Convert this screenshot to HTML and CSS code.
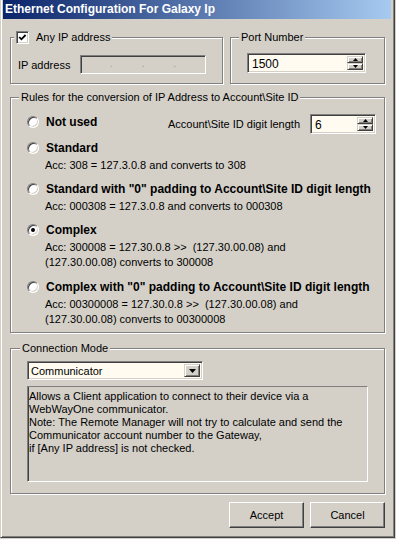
FILE: index.html
```html
<!DOCTYPE html>
<html lang="en">
<head>
  <meta charset="UTF-8" />
  <title>Ethernet Configuration For Galaxy Ip</title>
  <link rel="stylesheet" href="styles.css">
</head>
<body>
  <div class="window">
    <div class="titlebar">Ethernet Configuration For Galaxy Ip</div>

    <div class="content">
      <!-- IP address / port -->
      <div class="top-row">
        <fieldset class="group group-ip">
          <legend>
            <span class="legend-check">
              <span class="checkbox">
                <svg width="9" height="9" viewBox="0 0 9 9"><polyline points="1.2,4 3.4,6.3 7.6,2" fill="none" stroke="#000" stroke-width="1.8"/></svg>
              </span>
              Any IP address
            </span>
          </legend>
          <div class="ip-row">
            <span class="ip-label">IP address</span>
            <div class="field ip-field">
              <span>.</span><span>.</span><span>.</span>
            </div>
          </div>
        </fieldset>

        <fieldset class="group group-port">
          <legend>Port Number</legend>
          <div class="field spin-field port-field">
            <span class="spin-value">1500</span>
            <span class="spin">
              <span class="btn3d spin-btn"><svg width="5" height="3" viewBox="0 0 5 3"><polygon points="0,3 5,3 2.5,0" fill="#000"/></svg></span>
              <span class="btn3d spin-btn"><svg width="5" height="3" viewBox="0 0 5 3"><polygon points="0,0 5,0 2.5,3" fill="#000"/></svg></span>
            </span>
          </div>
        </fieldset>
      </div>

      <!-- Conversion rules -->
      <fieldset class="group group-rules">
        <legend>Rules for the conversion of IP Address to Account\Site ID</legend>

        <div class="option option-first">
          <div class="radio-row"><span class="radio"></span>Not used</div>
          <div class="digit-length">
            <span>Account\Site ID digit length</span>
            <div class="field spin-field digit-field">
              <span class="spin-value">6</span>
              <span class="spin">
                <span class="btn3d spin-btn"><svg width="5" height="3" viewBox="0 0 5 3"><polygon points="0,3 5,3 2.5,0" fill="#000"/></svg></span>
                <span class="btn3d spin-btn"><svg width="5" height="3" viewBox="0 0 5 3"><polygon points="0,0 5,0 2.5,3" fill="#000"/></svg></span>
              </span>
            </div>
          </div>
        </div>

        <div class="option option-second">
          <div class="radio-row"><span class="radio"></span>Standard</div>
          <div class="desc">Acc: 308 = 127.3.0.8 and converts to 308</div>
        </div>

        <div class="option">
          <div class="radio-row"><span class="radio"></span>Standard with "0" padding to Account\Site ID digit length</div>
          <div class="desc">Acc: 000308 = 127.3.0.8 and converts to 000308</div>
        </div>

        <div class="option">
          <div class="radio-row"><span class="radio checked"></span>Complex</div>
          <div class="desc">Acc: 300008 = 127.30.0.8 &gt;&gt;&nbsp; (127.30.00.08) and<br>(127.30.00.08) converts to 300008</div>
        </div>

        <div class="option option-last">
          <div class="radio-row"><span class="radio"></span>Complex with "0" padding to Account\Site ID digit length</div>
          <div class="desc">Acc: 00300008 = 127.30.0.8 &gt;&gt;&nbsp; (127.30.00.08) and<br>(127.30.00.08) converts to 00300008</div>
        </div>
      </fieldset>

      <!-- Connection mode -->
      <fieldset class="group group-mode">
        <legend>Connection Mode</legend>
        <div class="field combo">
          <span class="combo-value">Communicator</span>
          <span class="btn3d combo-btn"><svg width="7" height="4" viewBox="0 0 7 4"><polygon points="0,0 7,0 3.5,4" fill="#000"/></svg></span>
        </div>
        <div class="static-box">
          Allows a Client application to connect to their device via a<br>
          WebWayOne communicator.<br>
          Note: The Remote Manager will not try to calculate and send the<br>
          Communicator account number to the Gateway,<br>
          if [Any IP address] is not checked.
        </div>
      </fieldset>

      <div class="buttons">
        <button class="btn3d push">Accept</button>
        <button class="btn3d push">Cancel</button>
      </div>
    </div>
  </div>
</body>
</html>
```

FILE: styles.css
```css
/* Basic Reset */
* {
  margin: 0;
  padding: 0;
  box-sizing: border-box;
}
body {
  background: #d4d0c8;
  font-family: "Liberation Sans", Arial, sans-serif;
  font-size: 11px;
  color: #000;
}
/* Window frame */
.window {
  width: 395px;
  height: 538px;
  background: #d4d0c8;
  border: 1px solid;
  border-top: 0;
  border-color: #d4d0c8 #404040 #404040 #d4d0c8;
  box-shadow: inset 1px 0 #fff, inset -1px -1px #808080;
}
.titlebar {
  height: 19px;
  margin: 0 3px 0 2px;
  padding-left: 2px;
  line-height: 19px;
  font-size: 12px;
  font-weight: bold;
  color: #fff;
  background: linear-gradient(to right, #0a246a, #a6caf0);
  white-space: nowrap;
  overflow: hidden;
}
.content {
  padding: 12px 9px 0 9px;
}
/* Group boxes */
.group {
  min-width: 0;
  border: 1px solid #808080;
  box-shadow: inset 1px 1px #fff, 1px 1px #fff;
}
.group legend {
  height: 13px;
  line-height: 13px;
  padding: 0 2px;
  background: #d4d0c8;
  white-space: nowrap;
}
.top-row {
  display: flex;
  gap: 7px;
}
.group-ip {
  width: 213px;
  padding: 11px 0 9px 3px;
}
.group-port {
  flex: 1;
  padding: 9px 0 0 8px;
}
.legend-check {
  display: flex;
  align-items: center;
  gap: 7px;
}
/* 3D bits */
.checkbox {
  width: 13px;
  height: 13px;
  display: flex;
  align-items: center;
  justify-content: center;
  background: #fff;
  border: 1px solid;
  border-color: #808080 #fff #fff #808080;
  box-shadow: inset 1px 1px #404040, inset -1px -1px #d4d0c8;
}
.field {
  background: #fffbf0;
  border: 1px solid;
  border-color: #808080 #fff #fff #808080;
  box-shadow: inset 1px 1px #404040, inset -1px -1px #d4d0c8;
}
.btn3d {
  background: #d4d0c8;
  border: 1px solid;
  border-color: #d4d0c8 #404040 #404040 #d4d0c8;
  box-shadow: inset 1px 1px #fff, inset -1px -1px #808080;
}
/* IP row */
.ip-row {
  display: flex;
  align-items: center;
  margin-left: 4px;
}
.ip-label {
  width: 62px;
}
.ip-field {
  width: 126px;
  height: 19px;
  background: #d4d0c8;
  display: flex;
  justify-content: space-evenly;
  line-height: 15px;
  color: #a0a0a0;
}
/* Spin edits */
.spin-field {
  display: flex;
  align-items: stretch;
  padding: 2px;
}
.spin-value {
  flex: 1;
  padding-left: 2px;
  line-height: 16px;
  font-size: 12px;
}
.spin {
  width: 16px;
  display: flex;
  flex-direction: column;
}
.spin-btn {
  flex: 1;
  display: flex;
  align-items: center;
  justify-content: center;
}
.port-field {
  width: 119px;
  height: 20px;
  margin-left: 8px;
}
.digit-field {
  width: 66px;
  height: 20px;
  margin-left: 10px;
}
/* Rules */
.group-rules {
  margin-top: 7px;
  padding: 9px 8px 5px 8px;
}
.option {
  margin-left: 8px;
  margin-top: 7px;
}
.option-first {
  margin-top: 0;
  display: flex;
  justify-content: space-between;
  align-items: flex-start;
}
.option-second {
  margin-top: 5px;
}
.option-last {
  margin-top: 8px;
}
.radio-row {
  display: flex;
  align-items: center;
  gap: 7px;
  height: 17px;
  font-size: 12px;
  font-weight: bold;
  white-space: nowrap;
}
.radio {
  position: relative;
  width: 12px;
  height: 12px;
  flex: none;
  border-radius: 50%;
  background: #fff;
  border: 1px solid;
  border-color: #808080 #fff #fff #808080;
  box-shadow: inset 1px 1px #404040, inset -1px -1px #d4d0c8;
}
.radio.checked::after {
  content: "";
  position: absolute;
  left: 3px;
  top: 3px;
  width: 4px;
  height: 4px;
  border-radius: 50%;
  background: #000;
}
.digit-length {
  display: flex;
  align-items: center;
  margin-top: 1px;
}
.desc {
  margin: 2px 0 0 18px;
  line-height: 15px;
  white-space: nowrap;
}
/* Connection mode */
.group-mode {
  margin-top: 9px;
  padding: 6px 0 11px 9px;
}
.combo {
  width: 176px;
  height: 19px;
  margin-left: 7px;
  display: flex;
  padding: 2px;
}
.combo-value {
  flex: 1;
  padding-left: 1px;
  line-height: 15px;
}
.combo-btn {
  width: 16px;
  display: flex;
  align-items: center;
  justify-content: center;
}
.static-box {
  width: 341px;
  height: 96px;
  margin: 6px 0 0 7px;
  padding: 3px 0 0 1px;
  line-height: 13px;
  white-space: nowrap;
  border: 1px solid;
  border-color: #808080 #fff #fff #808080;
  box-shadow: inset 1px 0 #404040;
}
/* Buttons */
.buttons {
  display: flex;
  justify-content: flex-end;
  gap: 6px;
  margin-top: 8px;
}
.push {
  width: 75px;
  height: 26px;
  font-family: inherit;
  font-size: 11px;
  color: #000;
  border-color: #fff #404040 #404040 #fff;
  box-shadow: inset -1px -1px #808080;
}
```
